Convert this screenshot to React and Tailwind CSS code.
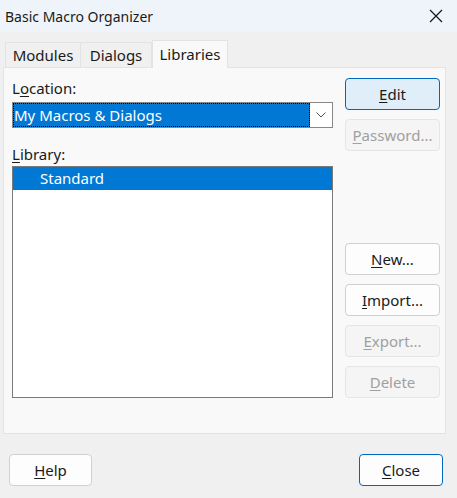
import React from "react";

const U = ({ children }) => <span className="underline underline-offset-2 decoration-1">{children}</span>;

function Btn({ children, className = "", disabled, primary, focus }) {
  return (
    <div
      className={
        "flex items-center justify-center rounded-[4px] border h-[32px] shrink-0 " +
        (primary
          ? "bg-[#e0eef9] border-[#0067c0] text-[#1a1a1a] "
          : focus
          ? "bg-[#fdfdfd] border-[#0067c0] text-[#1a1a1a] "
          : disabled
          ? "bg-[#f5f5f5] border-[#e5e5e5] text-[#a0a0a0] "
          : "bg-[#fdfdfd] border-[#d0d0d0] text-[#1a1a1a] ") +
        className
      }
    >
      {children}
    </div>
  );
}

export default function App() {
  return (
    <div
      className="w-[457px] h-[498px] bg-[#f0f0f0] flex flex-col text-[15px] text-[#1a1a1a] overflow-hidden"
      style={{ fontFamily: '"Noto Sans", "Open Sans", sans-serif' }}
    >
      {/* title bar */}
      <div className="h-[32px] bg-[#eef4f9] flex items-center justify-between pl-[5px] pr-[14px]">
        <span className="text-[14px]">Basic Macro Organizer</span>
        <svg width="14" height="14" viewBox="0 0 14 14">
          <path d="M1 1L13 13M13 1L1 13" stroke="#1a1a1a" strokeWidth="1.3" />
        </svg>
      </div>

      {/* tabs */}
      <div className="mt-[8px] ml-[5px] flex items-end h-[27px] relative z-10">
        <div className="h-[25px] w-[76px] border border-b-0 border-[#e3e3e3] flex items-center justify-center">Modules</div>
        <div className="h-[25px] w-[71px] border border-b-0 border-l-0 border-[#e3e3e3] flex items-center justify-center">Dialogs</div>
        <div className="h-[28px] w-[76px] border border-b-0 border-[#e3e3e3] bg-[#f9f9f9] flex items-center justify-center -mb-[1px]">Libraries</div>
      </div>

      {/* panel */}
      <div className="ml-[3px] w-[443px] h-[367px] bg-[#f9f9f9] border border-[#e3e3e3] flex pl-[8px] pt-[9px] pr-[5px]">
        <div className="w-[321px] shrink-0 flex flex-col">
          <div className="h-[24px] flex items-center mt-[-1px]">
            <span>L<U>o</U>cation:</span>
          </div>
          <div className="mt-[2px] h-[26px] border border-[#878787] bg-white flex">
            <div className="flex-1 bg-[#0078d4] text-white flex items-center pl-[1px] outline outline-1 outline-dotted outline-[#000] -outline-offset-1">
              My Macros &amp; Dialogs
            </div>
            <div className="w-[22px] flex items-center justify-center">
              <svg width="10" height="6" viewBox="0 0 10 6">
                <path d="M0.5 0.5L5 5L9.5 0.5" fill="none" stroke="#555" strokeWidth="1" />
              </svg>
            </div>
          </div>
          <div className="mt-[14px] h-[24px] flex items-center">
            <span><U>L</U>ibrary:</span>
          </div>
          <div className="h-[232px] border border-[#7a7a7a] bg-white mt-[0px]">
            <div className="h-[23px] bg-[#0078d4] text-white flex items-center pl-[27px]">Standard</div>
          </div>
        </div>
        <div className="ml-[12px] w-[95px] shrink-0 flex flex-col pt-[1px]">
          <Btn primary><span><U>E</U>dit</span></Btn>
          <Btn disabled className="mt-[9px]"><span><U>P</U>assword...</span></Btn>
          <Btn className="mt-[92px]"><span><U>N</U>ew...</span></Btn>
          <Btn className="mt-[9px]"><span><U>I</U>mport...</span></Btn>
          <Btn disabled className="mt-[9px]"><span><U>E</U>xport...</span></Btn>
          <Btn disabled className="mt-[9px]"><span><U>D</U>elete</span></Btn>
        </div>
      </div>

      {/* bottom */}
      <div className="mt-[20px] flex justify-between pl-[9px] pr-[14px]">
        <Btn className="w-[83px]"><span><U>H</U>elp</span></Btn>
        <Btn focus className="w-[84px]"><span><U>C</U>lose</span></Btn>
      </div>
    </div>
  );
}
